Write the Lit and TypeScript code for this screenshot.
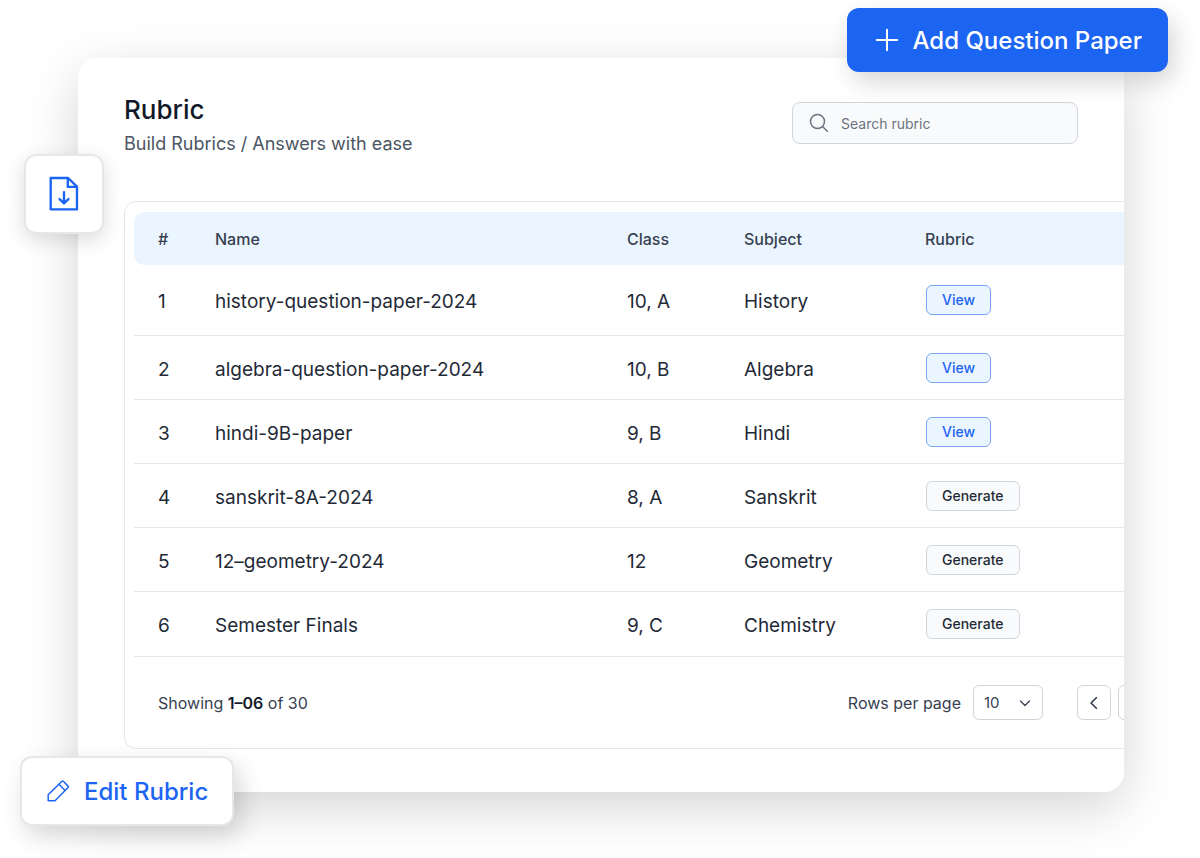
import { LitElement, html, css, svg } from "lit";
import { customElement, state } from "lit/decorators.js";

interface Paper {
  id: number;
  name: string;
  group: string;
  subject: string;
  ready: boolean;
}

const PAPERS: Paper[] = [
  { id: 1, name: "history-question-paper-2024", group: "10, A", subject: "History", ready: true },
  { id: 2, name: "algebra-question-paper-2024", group: "10, B", subject: "Algebra", ready: true },
  { id: 3, name: "hindi-9B-paper", group: "9, B", subject: "Hindi", ready: true },
  { id: 4, name: "sanskrit-8A-2024", group: "8, A", subject: "Sanskrit", ready: false },
  { id: 5, name: "12–geometry-2024", group: "12", subject: "Geometry", ready: false },
  { id: 6, name: "Semester Finals", group: "9, C", subject: "Chemistry", ready: false },
];

const shapes = {
  plus: svg`<path d="M12 1.8v20.4M1.8 12h20.4" stroke-width="2"/>`,
  search: svg`<circle cx="10.2" cy="10.2" r="8.4"/><path d="M16.2 16.2 22 22"/>`,
  file: svg`<path d="M3.6 1.9h11l5.6 5.4v14.4H3.6z" stroke-width="1.5"/><path d="M14.4 2.1v5.4h5.6M12 10.8v6.9M9.2 15.2l2.8 2.7 2.8-2.7" stroke-width="1.5"/>`,
  pencil: svg`<path d="M15.9 2.3a1 1 0 0 1 1.4 0l4.8 4.8a1 1 0 0 1 0 1.4L9 21.7H2.2v-5.9zM12.9 5.3l6.2 6.2" stroke-width="1.5"/>`,
  down: svg`<path d="M3 8l9 9 9-9" stroke-width="2.6"/>`,
  left: svg`<path d="M16 3l-9 9 9 9" stroke-width="3"/>`,
  right: svg`<path d="M8 3l9 9-9 9" stroke-width="3"/>`,
};

const icon = (name: keyof typeof shapes, cls: string) => html`
  <svg class="icon ${cls}" viewBox="0 0 24 24" aria-hidden="true">${shapes[name]}</svg>
`;

@customElement("app-root")
export class AppRoot extends LitElement {
  @state() private query = "";

  static styles = css`
    :host {
      display: block;
      position: relative;
      box-sizing: border-box;
      min-height: 100vh;
      padding: 58px 76px 66px 78px;
      overflow: hidden;
      background: #fff;
      color: #1f2a37;
      font-family: Inter, "Liberation Sans", sans-serif;
    }
    * {
      box-sizing: border-box;
    }
    button,
    input,
    select {
      font: inherit;
      color: inherit;
      margin: 0;
    }
    button {
      cursor: pointer;
    }
    .icon {
      display: block;
      flex: none;
      width: 24px;
      height: 24px;
      fill: none;
      stroke: currentColor;
      stroke-width: 1.8;
      stroke-linecap: round;
      stroke-linejoin: round;
    }
    .shadow {
      border-radius: 20px;
      box-shadow: 0 16px 52px rgba(0, 0, 0, 0.17);
    }
    .card {
      padding: 36px 0 43px 46px;
      border-radius: 20px;
      background: #fff;
      overflow: hidden;
    }
    header {
      display: flex;
      justify-content: space-between;
      align-items: flex-start;
      padding: 0 46px 43px 0;
    }
    h1 {
      margin: 0;
      color: #111928;
      font-size: 26px;
      line-height: 32px;
      font-weight: 500;
    }
    .subtitle {
      margin: 4px 0 0;
      color: #4b5563;
      font-size: 18px;
      line-height: 28px;
    }
    .search {
      display: flex;
      align-items: center;
      gap: 12px;
      width: 286px;
      height: 42px;
      margin-top: 8px;
      padding: 0 16px;
      border: 1px solid #d1d5db;
      border-radius: 8px;
      background: #f9fafb;
      color: #6b7280;
    }
    .search .icon {
      width: 20px;
      height: 20px;
    }
    .search input {
      flex: 1;
      min-width: 0;
      padding: 0;
      border: 0;
      outline: 0;
      background: none;
      font-size: 14px;
    }
    .search input::placeholder {
      color: #6b7280;
      opacity: 1;
    }
    .frame {
      width: calc(100% + 80px);
      padding: 10px 9px 28px;
      border: 1px solid #e5e7eb;
      border-radius: 12px;
    }
    table {
      width: 100%;
      border-collapse: separate;
      border-spacing: 0;
      table-layout: fixed;
    }
    .num {
      width: 81px;
    }
    .group {
      width: 117px;
    }
    .subject {
      width: 181px;
    }
    .action {
      width: 269px;
    }
    th {
      height: 53px;
      padding: 0;
      background: #ebf5ff;
      color: #374151;
      font-size: 16px;
      font-weight: 500;
      text-align: left;
    }
    th:first-child {
      border-radius: 10px 0 0 10px;
    }
    th:first-child,
    td:first-child {
      padding-left: 24px;
    }
    td {
      height: 64px;
      padding: 4px 0 0;
      border-bottom: 1px solid #e5e7eb;
      font-size: 19px;
      line-height: 24px;
    }
    tbody tr:first-child td {
      height: 71px;
    }
    tbody tr:last-child td {
      height: 65px;
    }
    td:last-child {
      padding: 0 0 0 1px;
    }
    .pill {
      display: block;
      height: 30px;
      padding: 0 15px;
      border: 1px solid #d1d5db;
      border-radius: 6px;
      background: #f9fafb;
      font-size: 14px;
      line-height: 28px;
      font-weight: 500;
    }
    .pill.view {
      border-color: #76a9fa;
      background: #ebf5ff;
      color: #1c64f2;
    }
    .footer {
      display: flex;
      align-items: center;
      padding: 28px 0 0 24px;
      color: #374151;
      font-size: 16px;
    }
    .footer strong {
      color: #111928;
      font-weight: 600;
    }
    .rows {
      margin: 0 12px 0 auto;
    }
    .select {
      display: grid;
      align-items: center;
      width: 70px;
      height: 35px;
      margin-right: 34px;
    }
    .select select,
    .select .icon {
      grid-area: 1 / 1;
    }
    .select select {
      width: 100%;
      height: 100%;
      padding: 0 10px;
      border: 1px solid #d1d5db;
      border-radius: 6px;
      background: #fff;
      font-size: 15px;
      appearance: none;
    }
    .select .icon {
      justify-self: end;
      width: 12px;
      height: 12px;
      margin-right: 12px;
      pointer-events: none;
    }
    .pager {
      display: flex;
      gap: 7px;
      padding-right: 42px;
    }
    .pager button {
      display: grid;
      place-items: center;
      width: 34px;
      height: 35px;
      padding: 0;
      border: 1px solid #d1d5db;
      border-radius: 6px;
      background: #fff;
    }
    .pager .icon {
      width: 14px;
      height: 14px;
    }
    .float {
      position: absolute;
      display: flex;
      align-items: center;
      border: 2px solid #e5e7eb;
      border-radius: 12px;
      background: #fff;
      color: #1c64f2;
      font-size: 24px;
      font-weight: 500;
      white-space: nowrap;
      box-shadow: 6px 10px 24px rgba(0, 0, 0, 0.16);
    }
    .add {
      top: 8px;
      right: 32px;
      height: 64px;
      gap: 14px;
      padding: 0 26px 0 28px;
      border: 0;
      background: #1c64f2;
      color: #fff;
    }
    .download {
      top: 154px;
      left: 24px;
      width: 80px;
      height: 80px;
      padding: 0;
      justify-content: center;
      box-shadow: 0 6px 20px rgba(0, 0, 0, 0.14);
    }
    .download .icon {
      width: 38px;
      height: 38px;
    }
    .edit {
      top: 756px;
      left: 20px;
      height: 70px;
      gap: 14px;
      padding: 0 24px;
    }
  `;

  private onSearch(e: Event) {
    this.query = (e.target as HTMLInputElement).value;
  }

  render() {
    const q = this.query.toLowerCase();
    const papers = PAPERS.filter((p) => p.name.toLowerCase().includes(q));
    return html`
      <div class="shadow">
        <main class="card">
          <header>
            <div>
              <h1>Rubric</h1>
              <p class="subtitle">Build Rubrics / Answers with ease</p>
            </div>
            <label class="search">
              ${icon("search", "")}
              <input
                type="text"
                aria-label="Search rubric"
                placeholder="Search rubric"
                .value=${this.query}
                @input=${this.onSearch}
              />
            </label>
          </header>
          <section class="frame">
            <table>
              <thead>
                <tr>
                  <th class="num" scope="col">#</th>
                  <th scope="col">Name</th>
                  <th class="group" scope="col">Class</th>
                  <th class="subject" scope="col">Subject</th>
                  <th class="action" scope="col">Rubric</th>
                </tr>
              </thead>
              <tbody>
                ${papers.map(
                  (p) => html`
                    <tr>
                      <td>${p.id}</td>
                      <td>${p.name}</td>
                      <td>${p.group}</td>
                      <td>${p.subject}</td>
                      <td>
                        <button type="button" class="pill ${p.ready ? "view" : ""}">
                          ${p.ready ? "View" : "Generate"}
                        </button>
                      </td>
                    </tr>
                  `
                )}
              </tbody>
            </table>
            <div class="footer">
              <span>Showing <strong>1–06</strong> of 30</span>
              <label class="rows" for="rows">Rows per page</label>
              <span class="select">
                <select id="rows">
                  <option>10</option>
                  <option>20</option>
                  <option>30</option>
                </select>
                ${icon("down", "")}
              </span>
              <nav class="pager" aria-label="Pages">
                <button type="button" aria-label="Previous page">${icon("left", "")}</button>
                <button type="button" aria-label="Next page">${icon("right", "")}</button>
              </nav>
            </div>
          </section>
        </main>
      </div>
      <button type="button" class="float add">${icon("plus", "")}Add Question Paper</button>
      <button type="button" class="float download" aria-label="Download">${icon("file", "")}</button>
      <button type="button" class="float edit">${icon("pencil", "")}Edit Rubric</button>
    `;
  }
}
